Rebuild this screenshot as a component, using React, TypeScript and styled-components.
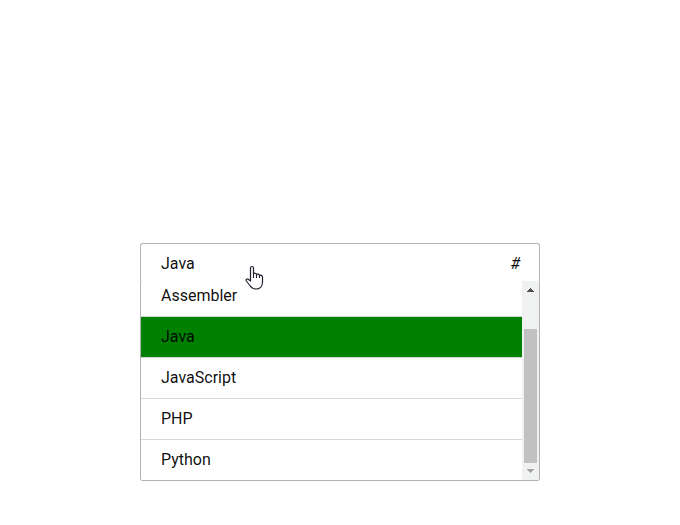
import React from "react";
import styled, { createGlobalStyle } from "styled-components";

const GlobalStyle = createGlobalStyle`
  *, *::before, *::after { box-sizing: border-box; }
  body {
    margin: 0;
    background: #fff;
    color: rgba(0, 0, 0, 0.95);
    font: 16px/20px Roboto, sans-serif;
  }
`;

const Page = styled.main`
  height: 525px;
  padding-top: 243px;
  overflow: hidden;
`;

const Select = styled.div`
  position: relative;
  width: 400px;
  margin: 0 auto;
`;

const Trigger = styled.div`
  display: flex;
  align-items: center;
  justify-content: space-between;
  height: 40px;
  padding: 0 19px 0 20px;
  border: 1px solid #b3b3b3;
  border-bottom: 0;
  border-radius: 3px;
`;

const Marker = styled.span`
  font-style: italic;
`;

const Dropdown = styled.div`
  display: flex;
  height: 200px;
  margin-top: -2px;
  border: 1px solid #b3b3b3;
  border-top: 0;
  border-radius: 3px;
  background: #fff;
  overflow: hidden;
`;

const Options = styled.ul`
  display: flex;
  flex: 1;
  flex-direction: column;
  justify-content: flex-end;
  margin: 0;
  padding: 0;
  list-style: none;
  overflow: hidden;
`;

const Option = styled.li<{ $selected: boolean }>`
  flex: none;
  height: 41px;
  padding: 10px 20px;
  border-bottom: 1px solid #d9d9d9;
  background: ${({ $selected }) => ($selected ? "#008000" : "#fff")};
  background-clip: padding-box;

  &:last-child {
    height: 40px;
    border-bottom: 0;
  }
`;

const Scrollbar = styled.div`
  display: flex;
  flex-direction: column;
  align-items: center;
  width: 17px;
  background: #f0f2f1;
`;

const ArrowButton = styled.svg`
  display: block;
  flex: none;
  width: 17px;
  height: 17px;
`;

const Track = styled.div`
  display: flex;
  flex: 1;
  align-items: flex-end;
`;

const Thumb = styled.div`
  width: 13px;
  height: 134px;
  background: #c1c1c1;
`;

const Pointer = styled.svg`
  position: absolute;
  top: 22px;
  left: 105px;
  width: 19px;
  height: 26px;
`;

const languages = ["Assembler", "Java", "JavaScript", "PHP", "Python"];

export default function App() {
  return (
    <>
      <GlobalStyle />
      <Page>
        <Select>
          <Trigger>
            <span>Java</span>
            <Marker>#</Marker>
          </Trigger>
          <Dropdown>
            <Options>
              {languages.map((name) => (
                <Option key={name} $selected={name === "Java"}>{name}</Option>
              ))}
            </Options>
            <Scrollbar>
              <ArrowButton viewBox="0 0 17 17" shapeRendering="crispEdges">
                <path d="M8 7h1v1h1v1h1v1h1v1H5v-1h1V9h1V8h1z" fill="#505050" />
              </ArrowButton>
              <Track><Thumb /></Track>
              <ArrowButton viewBox="0 0 17 17" shapeRendering="crispEdges">
                <path d="M5 6h7v1h-1v1h-1v1H9v1H8V9H7V8H6V7H5z" fill="#a3a3a3" />
              </ArrowButton>
            </Scrollbar>
          </Dropdown>
          <Pointer viewBox="0 0 19 26">
            <path
              d="M5.5 16V3c0-2 3-2 3 0v5.700c1-1 2.700-.5 3 .7 1-.8 2.600-.2 3 1 1.200-.8 3 .1 3 1.700V17c0 4-2.500 7-6.500 7-3.300 0-5-1.500-6.500-4L1.300 16c-1-1.500 1-2.700 2.300-1.500z"
              fill="#fff"
              stroke="#20202f"
              strokeWidth="1.2"
              strokeLinejoin="round"
            />
            <path d="M8.500 8v5M11.500 9v4M14.500 10v3" fill="none" stroke="#20202f" strokeWidth="1.1" />
          </Pointer>
        </Select>
      </Page>
    </>
  );
}
